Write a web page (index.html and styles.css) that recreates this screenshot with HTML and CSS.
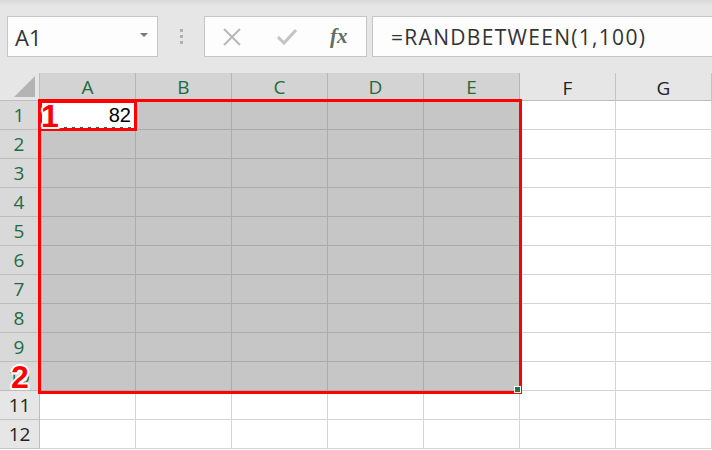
FILE: index.html
```html
<!DOCTYPE html>
<html><head><title>RANDBETWEEN</title><meta charset="utf-8">
<link rel="stylesheet" href="styles.css">
</head>
<body>
<div class="barra">
    <div class="cajaNombre"><span>A1</span><span class="flecha"></span></div>
    <div class="puntos"><i></i><i></i><i></i></div>
    <div class="botones">
        <svg width="20" height="20" viewBox="0 0 20 20"><path d="M2 2 L18 18 M18 2 L2 18" stroke="#b8b8b8" stroke-width="2" fill="none"/></svg>
        <svg width="22" height="20" viewBox="0 0 22 20"><path d="M2 10 L8 16 L20 3" stroke="#c4c4c4" stroke-width="3" fill="none"/></svg>
        <span class="fx">fx</span>
    </div>
    <div class="formula">=RANDBETWEEN(1,100)</div>
</div>

<div class="hoja" id="hoja"></div>

<script>
    //construir la cuadricula
    let hoja=document.getElementById("hoja");
    let letras=["A","B","C","D","E","F","G"];
    let html='<div class="esquina"><div class="triangulo"></div></div>';
    for(let i=0;i<letras.length;i++){
        html+='<div class="colHead'+(i<5?' sel':'')+'">'+letras[i]+'</div>';
    }
    for(let f=1;f<=12;f++){
        html+='<div class="filHead'+(f<=10?' sel':'')+'">'+f+'</div>';
        for(let c=0;c<7;c++){
            let clase="celda";
            if(f<=10 && c<5) clase+=" gris";
            if(f==1 && c==0) clase="celda activa";
            let texto=(f==1 && c==0)?"82":"";
            html+='<div class="'+clase+'">'+texto+'</div>';
        }
    }
    html+='<div class="hormigas"></div>';
    html+='<div class="marco uno"></div><div class="marco dos"></div>';
    html+='<div class="asa"></div>';
    html+='<span class="etiqueta e1">1</span><span class="etiqueta e2">2</span>';
    hoja.innerHTML=html;
</script>
</body>
</html>
```

FILE: styles.css
```css
body {margin:0; font-family:"Open Sans", "Noto Sans", sans-serif; background:#fff; width:712px; height:450px; overflow:hidden;}
.barra {height:73px; background:linear-gradient(#d9d9d9, #e6e6e6 6px); display:flex; align-items:flex-start; padding:16px 0 0 7px; box-sizing:border-box;}
.cajaNombre {width:151px; height:41px; box-sizing:border-box; border:1px solid #c6c6c6; background:#fdfdfd; display:flex; align-items:center; justify-content:space-between; padding:0 9px 0 7px; font-size:22px; color:#333;}
.flecha {width:0; height:0; border-left:4px solid transparent; border-right:4px solid transparent; border-top:4px solid #777; margin-bottom:4px;}
.puntos {width:46px; height:41px; display:flex; flex-direction:column; align-items:center; justify-content:center; gap:3px;}
.puntos i {width:3px; height:3px; background:#b0b0b0;}
.botones {width:163px; height:41px; box-sizing:border-box; border:1px solid #c6c6c6; background:#fdfdfd; display:flex; align-items:center; padding-left:17px; gap:34px;}
.fx {font-family:"Liberation Serif", serif; font-style:italic; font-weight:bold; font-size:21px; color:#5f6e5f; margin-left:-2px;}
.formula {flex:1; margin-left:5px; height:41px; box-sizing:border-box; border:1px solid #c6c6c6; border-right:none; background:#fdfdfd; display:flex; align-items:center; padding-left:18px; font-size:21px; letter-spacing:1.3px; color:#333;}

.hoja {position:relative; display:grid; grid-template-columns:40px repeat(7, 96px); grid-template-rows:28px repeat(12, 29px);}
.hoja div {box-sizing:border-box;}
.esquina {background:#e6e6e6; border-right:1px solid #bdbdbd; border-bottom:1px solid #bdbdbd; display:flex; align-items:flex-end; justify-content:flex-end; padding:0 4px 3px 0;}
.triangulo {width:0; height:0; border-left:21px solid transparent; border-bottom:21px solid #b4b4b4;}
.colHead {background:#e6e6e6; border-right:1px solid #c4c4c4; border-bottom:1px solid #bdbdbd; display:flex; align-items:center; justify-content:center; font-size:19px; color:#222; padding-top:2px;}
.colHead.sel {background:#d3d3d3; color:#1e6b43; border-right-color:#b5b5b5; border-bottom:2px solid #217346;}
.filHead {background:#e6e6e6; border-right:1px solid #bdbdbd; border-bottom:1px solid #c4c4c4; display:flex; align-items:center; justify-content:center; font-size:19px; color:#222;}
.filHead.sel {background:#d9d9d9; color:#1e6b43; border-bottom-color:#bdbdbd; border-right:2px solid #217346;}
.celda {background:#fff; border-right:1px solid #d4d4d4; border-bottom:1px solid #d4d4d4;}
.celda.gris {background:#c6c6c6; border-right-color:#ababab; border-bottom-color:#ababab;}
.celda.activa {background:#fff; border-right:1px solid #ababab; border-bottom:1px solid #ababab; text-align:right; padding:2px 4px 0 0; font-family:"Liberation Sans", sans-serif; font-size:20px; color:#000; line-height:24px;}

.hormigas {position:absolute; left:43px; top:54px; width:91px; height:2px; background:repeating-linear-gradient(90deg, #fff 0 5px, #217346 5px 8px);}
.marco {position:absolute; border:3px solid #ff0000; box-sizing:border-box;}
.marco.uno {left:39px; top:27px; width:98px; height:31px;}
.marco.dos {left:38px; top:26px; width:484px; height:295px;}
.asa {position:absolute; left:514px; top:313px; width:7px; height:7px; background:#217346; border:1px solid #fff;}
.etiqueta {position:absolute; font-family:"Liberation Sans", sans-serif; font-weight:bold; font-size:32px; color:#f00; line-height:1;
    text-shadow:2px 0 #fff, -2px 0 #fff, 0 2px #fff, 0 -2px #fff, 1.5px 1.5px #fff, -1.5px -1.5px #fff, 1.5px -1.5px #fff, -1.5px 1.5px #fff;}
.e1 {left:41px; top:27px;}
.e2 {left:11px; top:288px;}
```
